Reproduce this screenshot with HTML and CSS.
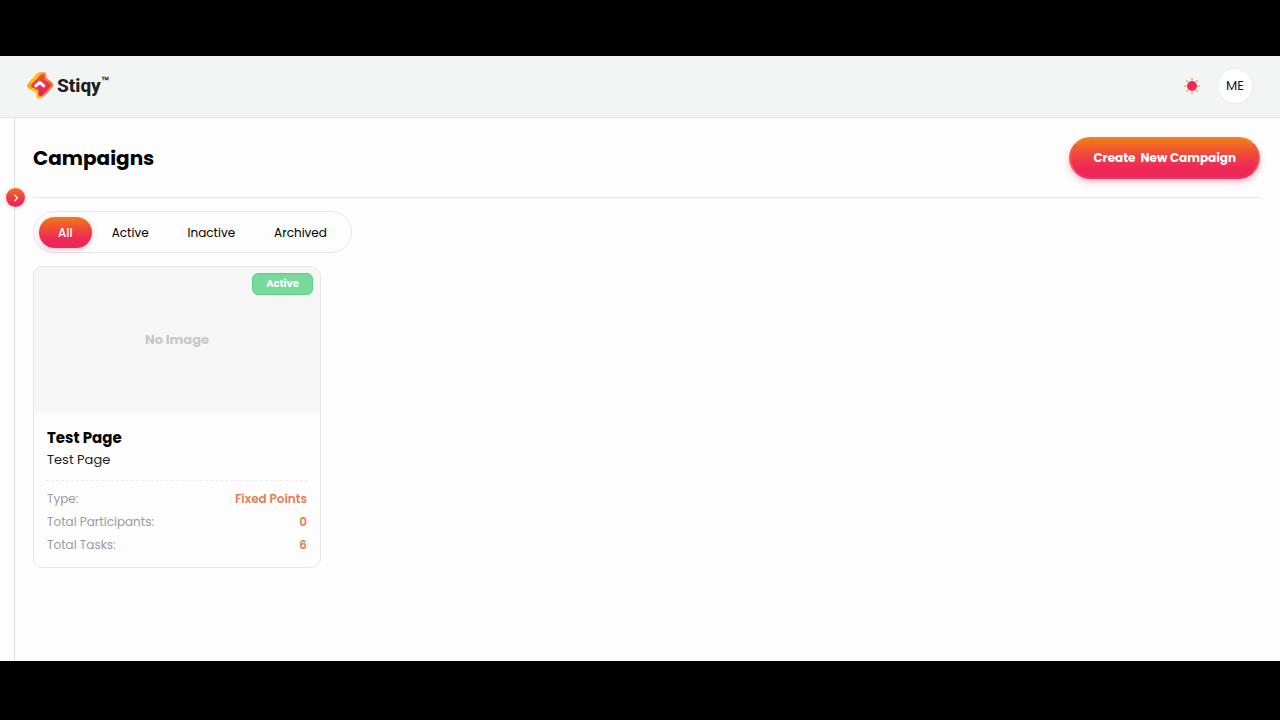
FILE: index.html
```html
<!DOCTYPE html>
<html lang="en">
<head>
<meta charset="utf-8">
<meta name="viewport" content="width=device-width, initial-scale=1">
<title>Stiqy – Campaigns</title>
<link rel="stylesheet" href="styles.css">
</head>
<body>
<div class="app">
  <header class="topbar">
    <a class="brand" href="#" aria-label="Stiqy">
      <svg class="brand-mark" viewBox="0 0 28 28" aria-hidden="true">
        <defs>
          <linearGradient id="outer" x1="0" y1="0" x2="1" y2="0">
            <stop offset="0" stop-color="#fb9a18"/><stop offset="0.3" stop-color="#ffcd1c"/><stop offset="0.7" stop-color="#f98a28"/><stop offset="1" stop-color="#f26a2a"/>
          </linearGradient>
          <linearGradient id="inner" x1="0" y1="0" x2="0.3" y2="1">
            <stop offset="0" stop-color="#ee5a30"/><stop offset="1" stop-color="#e91e63"/>
          </linearGradient>
        </defs>
        <path d="M10 2Q12 .2 14.500 .2H18q2.200 0 2.200 2.200v3l5.800 5q2.200 2.600 0 5.200l-7.500 8.400q-2.500 2.400-5 2.400H12.500q-2.300 0-2.300-2.400V21L2.500 16.500q-2.500-2.800 0-5.500z" fill="url(#outer)"/>
        <path d="M14 3.500Q15.500 2 16.700 2q1.800 0 1.800 1.800v3.400l5.500 4.600q1.400 1.400 0 3l-7 7.900q-1.500 1.300-2.800 1.300-1.700 0-1.700-1.800v-4L5.600 15.300q-1.500-1.500 0-3.200z" fill="url(#inner)"/>
        <path d="M9.800 13.800l4-3.400 4 3.400" fill="none" stroke="#fff" stroke-width="3" stroke-linecap="round" stroke-linejoin="round"/>
      </svg>
      <span class="brand-name">Stiqy</span><span class="brand-tm">™</span>
    </a>
    <div class="topbar-actions">
      <button class="theme" type="button" aria-label="Toggle theme">
        <svg viewBox="0 0 16 16" aria-hidden="true">
          <circle cx="8" cy="8" r="5" fill="#ee2a58"/>
          <path d="M8 .8v1M8 14.200v1M.8 8h1M14.200 8h1M2.900 2.900l.6.600M12.500 12.500l.6.600M2.900 13.100l.6-.6M12.500 3.500l.6-.6" stroke="#efa04c" stroke-width="1.500" stroke-linecap="round"/>
        </svg>
      </button>
      <button class="avatar" type="button">ME</button>
    </div>
  </header>
  <div class="body">
    <aside class="rail">
      <button class="rail-toggle" type="button" aria-label="Expand menu">
        <svg viewBox="0 0 10 10" aria-hidden="true"><path d="M4 2.700l2.300 2.300L4 7.300" fill="none" stroke="#fff" stroke-width="1" stroke-linecap="round" stroke-linejoin="round"/></svg>
      </button>
    </aside>
    <main class="content">
      <div class="page-head">
        <h1>Campaigns</h1>
        <button class="create" type="button">Create&nbsp; New Campaign</button>
      </div>
      <nav class="tabs">
        <button class="tab tab-active" type="button">All</button>
        <button class="tab" type="button">Active</button>
        <button class="tab" type="button">Inactive</button>
        <button class="tab" type="button">Archived</button>
      </nav>
      <article class="card">
        <div class="card-image">
          <span class="badge">Active</span>
          No Image
        </div>
        <div class="card-text">
          <h2>Test Page</h2>
          <p>Test Page</p>
        </div>
        <dl class="stats">
          <div class="stat"><dt>Type:</dt><dd>Fixed Points</dd></div>
          <div class="stat"><dt>Total Participants:</dt><dd>0</dd></div>
          <div class="stat"><dt>Total Tasks:</dt><dd>6</dd></div>
        </dl>
      </article>
    </main>
  </div>
</div>
</body>
</html>
```
FILE: styles.css
```css
* { box-sizing: border-box; }

body {
  margin: 0;
  min-height: 100vh;
  padding: 56px 0 59px;
  display: flex;
  background: #000;
  color: #000;
  font-family: Poppins, Inter, sans-serif;
}

button {
  font: inherit;
  color: inherit;
  border: 0;
  padding: 0;
  background: none;
  cursor: pointer;
}

h1, h2, p, dl, dd { margin: 0; }

.app {
  flex: 1;
  display: flex;
  flex-direction: column;
  background: #fdfdfd;
}

.topbar {
  display: flex;
  align-items: center;
  justify-content: space-between;
  padding: 12px 27px 13px 26px;
  background: #f3f5f5;
  border-bottom: 1px solid #e2e5e5;
}

.brand {
  display: flex;
  align-items: center;
  color: #1d1f1f;
  text-decoration: none;
}

.brand-mark { width: 28px; height: 28px; }

.brand-name {
  margin-left: 3px;
  font: 800 19px/28px Roboto, sans-serif;
}

.brand-tm {
  align-self: flex-start;
  font: 700 13px/20px Roboto, sans-serif;
}

.topbar-actions {
  display: flex;
  align-items: center;
  gap: 17px;
}

.theme { display: flex; }
.theme svg { width: 16px; height: 16px; }

.avatar {
  width: 36px;
  height: 36px;
  border-radius: 50%;
  border: 1px solid #e8ecec;
  background: #fff;
  color: #0b1a1a;
  font-size: 13px;
}

.body { flex: 1; display: flex; }

.rail {
  position: relative;
  width: 15px;
  border-right: 1px solid #dfe0e0;
}

.rail-toggle {
  position: absolute;
  top: 70px;
  right: -11px;
  width: 19px;
  height: 19px;
  display: flex;
  align-items: center;
  justify-content: center;
  border-radius: 50%;
  background: linear-gradient(#f1701f, #ed2a55 75%);
  box-shadow: 0 1px 4px #ed2a5540;
}

.rail-toggle svg { width: 12px; height: 12px; }

.content {
  flex: 1;
  padding: 0 20px 24px 18px;
}

.page-head {
  display: flex;
  align-items: center;
  justify-content: space-between;
  padding: 19px 0 18px;
  border-bottom: 1px solid #e5e5e5;
}

h1 { font-size: 20px; line-height: 32px; font-weight: 700; }

.create {
  height: 42px;
  padding: 0 22px;
  border-radius: 21px;
  border: 2px solid #ef5a50;
  border-color: #f08030 #ee5850 #ee3560;
  background: linear-gradient(#f27a18, #f0433f 45%, #ed2857 75%);
  box-shadow: 0 3px 6px #ed285750;
  color: #fff;
  font-size: 12px;
  font-weight: 700;
}

.tabs {
  display: flex;
  gap: 1px;
  width: fit-content;
  margin: 13px 0;
  padding: 5px 5px 4px;
  border: 1px solid #e6e7e7;
  border-radius: 21px;
}

.tab {
  height: 31px;
  padding: 0 19px;
  border-radius: 16px;
  font-size: 12px;
  line-height: 18px;
}

.tab-active {
  background: linear-gradient(#f27a18, #f0433f 45%, #ed2857 75%);
  box-shadow: 0 2px 6px #ed285740;
  color: #fff;
  font-weight: 500;
}

.card {
  max-width: 288px;
  overflow: hidden;
  border: 1px solid #e6e6e6;
  border-radius: 10px;
}

.card-image {
  position: relative;
  height: 146px;
  display: flex;
  align-items: center;
  justify-content: center;
  background: #f6f6f6;
  color: #c8c8c8;
  font-size: 13px;
  font-weight: 700;
}

.badge {
  position: absolute;
  top: 6px;
  right: 7px;
  padding: 0 13px;
  border: 1px solid #5fcd88;
  border-radius: 6px;
  background: #78da9a;
  color: #fff;
  font-size: 10px;
  line-height: 20px;
  font-weight: 700;
}

.card-text {
  margin: 0 12px;
  padding: 14px 1px 9px;
  border-bottom: 1px dashed #ececec;
}

h2 { font-size: 15px; line-height: 22px; font-weight: 700; }
p { font-size: 13px; line-height: 22px; color: #1a1a1a; }

.stats {
  padding: 6px 13px 11px;
  font-size: 12px;
  line-height: 23px;
}

.stat { display: flex; justify-content: space-between; }
.stat dt { color: #9b9b9b; }
.stat dd { color: #e77d50; font-weight: 600; }
```
